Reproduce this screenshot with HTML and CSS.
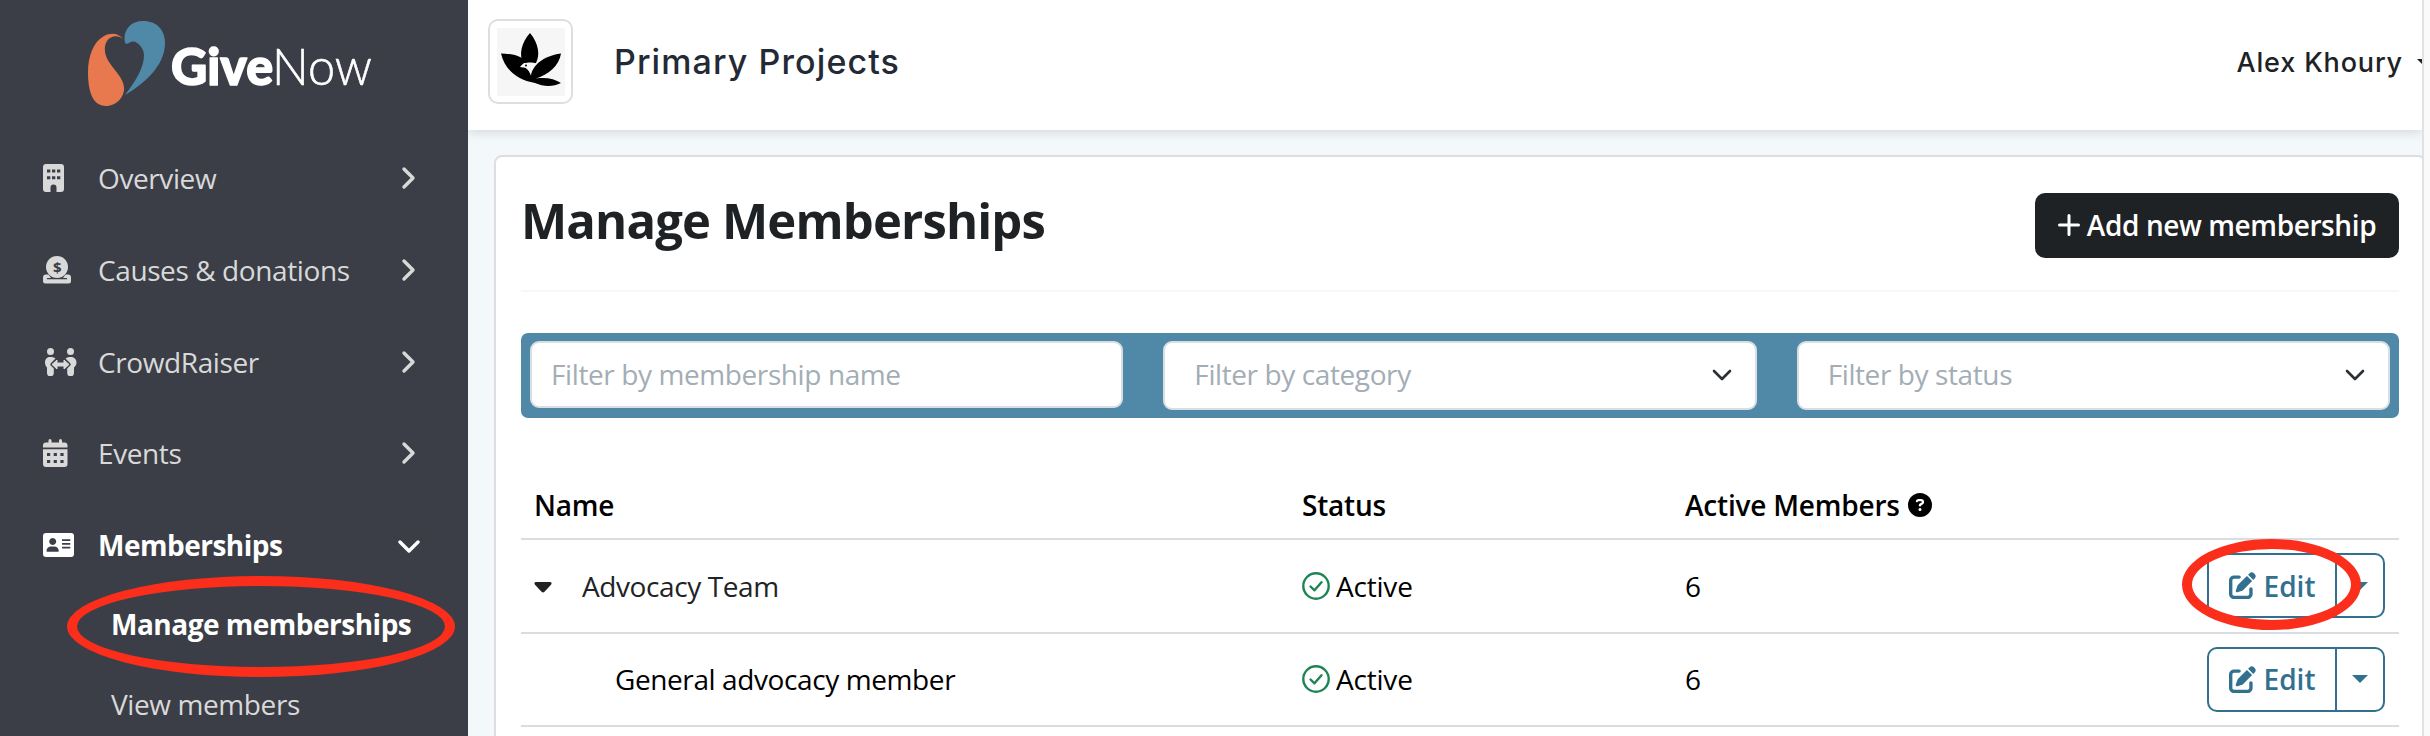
FILE: index.html
```html
<!DOCTYPE html>
<html lang="en">
<head>
    <meta charset="UTF-8">
    <meta name="viewport" content="width=device-width, initial-scale=1.0">
    <title>Manage Memberships - GiveNow</title>
    <link rel="stylesheet" href="styles.css">
</head>
<body>
    <aside class="sidebar">
        <svg class="brand" viewBox="0 0 290 90">
            <path fill="#e8784e" d="M35.500 19.500C31 13 23 12 16 16C5 22 0 37 0 52C0 72 5 86 18 86C29 86 37 76 36 67C35 58 27 51 21 42C17 36 15 27 19 21C23 15 31 15 35.500 19.500Z"/>
            <path fill="#5089a7" d="M36.500 20C36 9 43 1 55 1C69 1 77 10 77 23C77 47 54 65 37 75C47 62 56 48 56 35C56 28 49 21 45 21.500C42 21.500 39 25 37.500 23.500Z"/>
            <text class="brand-bold" x="83" y="65" textLength="102" lengthAdjust="spacingAndGlyphs">Give</text>
            <text class="brand-light" x="184" y="65" textLength="100" lengthAdjust="spacingAndGlyphs">Now</text>
        </svg>

        <nav class="nav">
            <a class="nav-item">
                <svg class="nav-icon" viewBox="0 0 32 28" fill="currentColor">
                    <path fill-rule="evenodd" d="M3 0H18a3 3 0 0 1 3 3V25a3 3 0 0 1-3 3H13.500V23.500a3 3 0 0 0-6 0V28H3a3 3 0 0 1-3-3V3a3 3 0 0 1 3-3ZM4 5.500v3h3.300v-3ZM9 5.500v3h3.300v-3ZM14 5.500v3h3.300v-3ZM4 12.300v3h3.300v-3ZM9 12.300v3h3.300v-3ZM14 12.300v3h3.300v-3Z"/>
                </svg>
                <span>Overview</span>
                <svg class="chevron" viewBox="0 0 22 24"><path d="M6 3L15 12L6 21"/></svg>
            </a>
            <a class="nav-item">
                <svg class="nav-icon" viewBox="0 0 32 28">
                    <circle cx="14" cy="11" r="11" fill="currentColor"/>
                    <path fill="currentColor" d="M3 18.500H5.500L8 22H4V23.300H24V22H20L22.500 18.500H25a3 3 0 0 1 3 3V25a2.500 2.500 0 0 1-2.500 2.500H2.500A2.500 2.500 0 0 1 0 25V21.500a3 3 0 0 1 3-3Z"/>
                    <text class="coin" x="14" y="16.500" text-anchor="middle">$</text>
                </svg>
                <span>Causes &amp; donations</span>
                <svg class="chevron" viewBox="0 0 22 24"><path d="M6 3L15 12L6 21"/></svg>
            </a>
            <a class="nav-item">
                <svg class="nav-icon nav-icon-wide" viewBox="0 0 34 28" fill="currentColor">
                    <circle cx="7.500" cy="3.500" r="3.500"/>
                    <circle cx="27.500" cy="3.500" r="3.500"/>
                    <path d="M7 9C3.500 9 2 11.500 2 14.500C2 17 3 18.500 4 19.500V25a3.300 3.300 0 0 0 6.800 0V20.500L8 17.800a2 2 0 0 1 0-2.800L12.500 10.500C11 9.300 9 9 7 9Z"/>
                    <path d="M28 9C31.500 9 33.500 11.500 33.500 14.500C33.500 17 32 18.500 31 19.500V25a3.300 3.300 0 0 1-6.800 0V20.500L27 17.800a2 2 0 0 0 0-2.800L22.500 10.500C24 9.300 26 9 28 9Z"/>
                    <path d="M9 16.500L14 12V15H21V12L26 16.500L21 21V18H14V21Z" stroke="currentColor" stroke-linejoin="round"/>
                </svg>
                <span>CrowdRaiser</span>
                <svg class="chevron" viewBox="0 0 22 24"><path d="M6 3L15 12L6 21"/></svg>
            </a>
            <a class="nav-item">
                <svg class="nav-icon" viewBox="0 0 32 28" fill="currentColor">
                    <path d="M5.500 1.500a1.500 1.500 0 0 1 3 0V3.500H16V1.500a1.500 1.500 0 0 1 3 0V3.500H21.500a3 3 0 0 1 3 3V8.500H0V6.500a3 3 0 0 1 3-3H5.500Z"/>
                    <path fill-rule="evenodd" d="M0 10.300H24.500V25a3 3 0 0 1-3 3H3a3 3 0 0 1-3-3ZM4 14v3h3.200v-3ZM10.700 14v3h3.200v-3ZM17.400 14v3h3.200v-3ZM4 21v3h3.200v-3ZM10.700 21v3h3.200v-3ZM17.400 21v3h3.200v-3Z"/>
                </svg>
                <span>Events</span>
                <svg class="chevron" viewBox="0 0 22 24"><path d="M6 3L15 12L6 21"/></svg>
            </a>
            <a class="nav-item active">
                <svg class="nav-icon" viewBox="0 0 32 28" fill="currentColor">
                    <path fill-rule="evenodd" d="M3 2H28a3 3 0 0 1 3 3V23a3 3 0 0 1-3 3H3a3 3 0 0 1-3-3V5a3 3 0 0 1 3-3ZM9.700 7a3.500 3.500 0 1 0 .01 0ZM8 15.500c-2.500 0-4.500 2-4.500 4.500a.8.800 0 0 0 .8.800H15a.8.800 0 0 0 .8-.8c0-2.500-2-4.500-4.500-4.500ZM19 8.300v1.700h8.300V8.300ZM19 12v1.700h8.300V12ZM19 15.700v1.700h8.300v-1.700Z"/>
                </svg>
                <span>Memberships</span>
                <svg class="chevron" viewBox="0 0 22 24"><path d="M2 9L11 18L20 9"/></svg>
            </a>
        </nav>

        <div class="subnav">
            <a class="subnav-item active">
                Manage memberships
                <span class="ring ring-menu"></span>
            </a>
            <a class="subnav-item">View members</a>
        </div>
    </aside>

    <div class="page">
        <header class="header">
            <div class="org-logo">
                <svg viewBox="0 0 68 68">
                    <path d="M33 5C24 15 22 27 26 34.500L30 36L39 35C43 27 42 16 33 5Z"/>
                    <path d="M4 25.500C15 25.500 25 28 29 34C26 35 25 37 23 39C27 38 31 40 34 47C36 38 45 28 64 25.500C62 38 52 46 39 50.500C49 49 58 51 64 55C56 59 47 59 38 55C20 52 8 42 4 25.500Z"/>
                    <path class="beak" d="M23 39L27 35.500C31 34 36 34.500 38 35C35 38 34 42 34 47.500C32 42 30 39.500 26 39.500Z"/>
                    <circle cx="29" cy="37.500" r="1"/>
                </svg>
            </div>
            <div class="org-name">Primary Projects</div>
            <div class="user">
                <span>Alex Khoury</span>
                <i class="user-caret"></i>
            </div>
        </header>

        <main class="card">
            <div class="title-row">
                <h1>Manage Memberships</h1>
                <button class="btn-add">
                    <svg viewBox="0 0 22 22"><path d="M11 1.500V20.500M1.500 11H20.500"/></svg>
                    <span>Add new membership</span>
                </button>
            </div>

            <div class="filters">
                <div class="field field-text">Filter by membership name</div>
                <div class="field">
                    <span>Filter by category</span>
                    <svg viewBox="0 0 22 14"><path d="M3 3L11 11L19 3"/></svg>
                </div>
                <div class="field">
                    <span>Filter by status</span>
                    <svg viewBox="0 0 22 14"><path d="M3 3L11 11L19 3"/></svg>
                </div>
            </div>

            <div class="table">
                <div class="row head">
                    <div>Name</div>
                    <div>Status</div>
                    <div class="with-icon">
                        Active Members
                        <svg class="help" viewBox="0 0 512 512"><path d="M256 512A256 256 0 1 0 256 0a256 256 0 1 0 0 512zM169.800 165.300c7.900-22.300 29.100-37.300 52.800-37.300h58.300c34.900 0 63.100 28.300 63.100 63.100c0 22.600-12.100 43.500-31.700 54.800L280 264.400c-.2 13-10.900 23.600-24 23.600c-13.300 0-24-10.700-24-24V250.500c0-8.600 4.600-16.500 12.100-20.800l44.300-25.400c4.700-2.700 7.600-7.700 7.600-13.100c0-8.400-6.800-15.100-15.100-15.100H222.600c-3.400 0-6.400 2.100-7.500 5.300l-.4 1.200c-4.400 12.500-18.200 19-30.600 14.600s-19-18.200-14.600-30.600l.4-1.200zM224 352a32 32 0 1 1 64 0 32 32 0 1 1 -64 0z"/></svg>
                    </div>
                    <div></div>
                </div>
                <div class="row">
                    <div class="name-parent">
                        <svg class="toggle" viewBox="0 0 18 11"><path d="M2 0H16C17.800 0 18 1.500 17 2.700L10.500 9.700C9.600 10.600 8.400 10.600 7.500 9.700L1 2.700C0 1.500 .2 0 2 0Z"/></svg>
                        <span>Advocacy Team</span>
                    </div>
                    <div class="status">
                        <svg viewBox="0 0 28 28"><circle cx="14" cy="14" r="12.700"/><path d="M8.500 14.500L12.500 18.300L19.500 10.200"/></svg>
                        <span>Active</span>
                    </div>
                    <div>6</div>
                    <div class="actions">
                        <div class="btn-group">
                            <button class="btn-edit">
                                <svg viewBox="0 0 512 512"><path d="M471.600 21.700c-21.900-21.900-57.300-21.900-79.200 0L362.300 51.700l97.900 97.900 30.100-30.100c21.900-21.900 21.900-57.300 0-79.200L471.600 21.700zm-299.200 220c-6.100 6.100-10.800 13.600-13.500 21.900l-29.600 88.800c-2.900 8.600-.6 18.100 5.800 24.600s15.900 8.700 24.600 5.800l88.800-29.600c8.200-2.700 15.700-7.400 21.900-13.500L437.700 172.300 339.700 74.300 172.400 241.700zM96 64C43 64 0 107 0 160V416c0 53 43 96 96 96H352c53 0 96-43 96-96V320c0-17.700-14.300-32-32-32s-32 14.300-32 32v96c0 17.700-14.300 32-32 32H96c-17.700 0-32-14.300-32-32V160c0-17.700 14.300-32 32-32h96c17.700 0 32-14.300 32-32s-14.300-32-32-32H96z"/></svg>
                                <span>Edit</span>
                            </button>
                            <button class="btn-more"><i></i></button>
                            <span class="ring ring-edit"></span>
                        </div>
                    </div>
                </div>
                <div class="row">
                    <div class="name-child">General advocacy member</div>
                    <div class="status">
                        <svg viewBox="0 0 28 28"><circle cx="14" cy="14" r="12.700"/><path d="M8.500 14.500L12.500 18.300L19.500 10.200"/></svg>
                        <span>Active</span>
                    </div>
                    <div>6</div>
                    <div class="actions">
                        <div class="btn-group">
                            <button class="btn-edit">
                                <svg viewBox="0 0 512 512"><path d="M471.600 21.700c-21.900-21.900-57.300-21.900-79.200 0L362.300 51.700l97.900 97.900 30.100-30.100c21.900-21.900 21.900-57.300 0-79.200L471.600 21.700zm-299.200 220c-6.100 6.100-10.800 13.600-13.500 21.900l-29.600 88.800c-2.900 8.600-.6 18.100 5.800 24.600s15.900 8.700 24.600 5.800l88.800-29.600c8.200-2.700 15.700-7.400 21.900-13.500L437.700 172.300 339.700 74.300 172.400 241.700zM96 64C43 64 0 107 0 160V416c0 53 43 96 96 96H352c53 0 96-43 96-96V320c0-17.700-14.300-32-32-32s-32 14.300-32 32v96c0 17.700-14.300 32-32 32H96c-17.700 0-32-14.300-32-32V160c0-17.700 14.300-32 32-32h96c17.700 0 32-14.300 32-32s-14.300-32-32-32H96z"/></svg>
                                <span>Edit</span>
                            </button>
                            <button class="btn-more"><i></i></button>
                        </div>
                    </div>
                </div>
            </div>
        </main>
    </div>
</body>
</html>
```
FILE: styles.css
```css
:root {
    --sidebar: #3c3e47;
    --sidebar-text: #d9d9d9;
    --dark: #1e2225;
    --blue: #5089a7;
    --link: #32708f;
    --line: #d9dde1;
    --red: #fb2d1b;
}

* {
    margin: 0;
    padding: 0;
    box-sizing: border-box;
}

body {
    display: flex;
    width: 2430px;
    height: 736px;
    overflow: hidden;
    background: #fafafa;
    color: #000;
    font-family: "Open Sans", "Noto Sans", sans-serif;
    font-size: 28px;
    line-height: 38px;
    letter-spacing: -0.4px;
}

button {
    font: inherit;
    letter-spacing: inherit;
    background: none;
    border: none;
}

svg {
    display: block;
    flex: none;
}

/* Sidebar */
.sidebar {
    width: 468px;
    height: 736px;
    flex: none;
    background: var(--sidebar);
    color: var(--sidebar-text);
    padding-top: 20px;
}

.brand {
    width: 290px;
    height: 90px;
    margin-left: 88px;
    fill: #fff;
    font-family: Lato, sans-serif;
    font-size: 52px;
    letter-spacing: 0;
}

.brand-bold {
    font-weight: 900;
    stroke: #fff;
    stroke-width: 1.6;
    stroke-linejoin: round;
}

.brand-light {
    font-weight: 300;
    stroke: #fff;
    stroke-width: 0.6;
}

.nav {
    display: flex;
    flex-direction: column;
    gap: 33.75px;
    padding: 39px 48px 0 43px;
}

.nav-item {
    display: flex;
    align-items: center;
    height: 58px;
}

.nav-item span {
    flex: 1;
}

.nav-icon {
    width: 32px;
    height: 28px;
    margin-right: 23px;
}

.nav-icon-wide {
    width: 34px;
    margin-right: 21px;
}

.coin {
    font-size: 15px;
    font-weight: 700;
    fill: var(--sidebar);
}

.chevron {
    width: 22px;
    height: 24px;
    fill: none;
    stroke: currentColor;
    stroke-width: 3.4;
    stroke-linecap: round;
    stroke-linejoin: round;
}

.active {
    color: #fff;
    font-weight: 700;
    letter-spacing: -0.5px;
}

.subnav {
    padding: 10px 0 0 111px;
}

.subnav-item {
    display: flex;
    align-items: center;
    position: relative;
    height: 80px;
}

/* Highlight rings drawn over the controls */
.ring {
    position: absolute;
    border: 10px solid var(--red);
    border-radius: 50%;
}

.ring-menu {
    left: -44px;
    top: -8px;
    width: 388px;
    height: 101px;
}

.ring-edit {
    left: -27px;
    top: -16px;
    width: 179px;
    height: 91px;
}

/* Page */
.page {
    width: 1956px;
    flex: none;
    overflow: hidden;
    background: #f3f8fb;
    border-right: 2px solid #e2e2e2;
}

.header {
    display: flex;
    align-items: center;
    height: 130px;
    padding: 0 0 7px 20px;
    background: #fff;
    box-shadow: 0 3px 10px rgba(0, 0, 0, 0.12);
    font-family: Inter, sans-serif;
    font-weight: 500;
}

.org-logo {
    width: 85px;
    height: 85px;
    padding: 7px;
    border: 2px solid #dedede;
    border-radius: 10px;
}

.org-logo svg {
    width: 68px;
    height: 68px;
    background: #f6f6f6;
}

.org-logo .beak {
    fill: #f6f6f6;
}

.org-name {
    margin-left: 41px;
    color: #242936;
    font-size: 34px;
    letter-spacing: 1.1px;
}

.user {
    display: flex;
    align-items: center;
    gap: 14px;
    margin-left: auto;
    margin-right: -11px;
    padding-top: 2px;
    color: var(--dark);
    font-size: 27px;
    letter-spacing: 0.85px;
}

.user-caret {
    border: 8px solid transparent;
    border-top-color: var(--dark);
    border-bottom: 0;
}

/* Card */
.card {
    height: 620px;
    margin: 25px -4px 0 26px;
    padding: 36px 25px 0 25px;
    background: #fff;
    border: 2px solid #dedede;
    border-radius: 8px;
}

.title-row {
    display: flex;
    justify-content: space-between;
    align-items: flex-start;
    height: 99px;
    border-bottom: 2px solid #f6f7f7;
}

h1 {
    color: var(--dark);
    font-size: 49px;
    font-weight: 700;
    line-height: 54px;
    letter-spacing: -0.85px;
}

.btn-add {
    display: flex;
    align-items: center;
    justify-content: center;
    gap: 7px;
    width: 364px;
    height: 65px;
    padding-bottom: 1px;
    border-radius: 10px;
    background: var(--dark);
    color: #fff;
    font-weight: 600;
}

.btn-add svg {
    width: 22px;
    height: 22px;
    fill: none;
    stroke: #fff;
    stroke-width: 3;
    stroke-linecap: round;
}

.filters {
    display: grid;
    grid-template-columns: repeat(3, 1fr);
    gap: 40px;
    align-items: start;
    height: 85px;
    margin-top: 41px;
    padding: 8px 9px;
    border-radius: 7px;
    background: var(--blue);
    color: #a3adb6;
}

.field {
    display: flex;
    align-items: center;
    justify-content: space-between;
    height: 69px;
    padding: 0 22px 3px 29px;
    border: 2px solid #d9dee2;
    border-radius: 9px;
    background: #fff;
}

.field-text {
    height: 67px;
    padding: 0 20px 1px 19px;
}

.field svg {
    width: 22px;
    height: 14px;
    margin-top: 2px;
    fill: none;
    stroke: #2b3035;
    stroke-width: 2.6;
    stroke-linecap: round;
    stroke-linejoin: round;
}

/* Table */
.table {
    padding-top: 52px;
}

.row {
    display: grid;
    grid-template-columns: 768px 383px 1fr 192px;
    align-items: center;
    height: 93.5px;
    padding: 0 14px 0 13px;
    border-bottom: 2px solid var(--line);
}

.head {
    height: 70px;
    padding-top: 1px;
    font-weight: 600;
    letter-spacing: -0.2px;
}

.with-icon {
    display: flex;
    align-items: center;
    gap: 8px;
}

.help {
    width: 24px;
    height: 24px;
    margin-top: 1px;
}

.name-parent {
    display: flex;
    align-items: center;
    gap: 30px;
    color: #212325;
}

.toggle {
    width: 18px;
    height: 11px;
    margin-top: 3px;
    fill: #212325;
}

.name-child {
    padding-left: 81px;
}

.status {
    display: flex;
    align-items: center;
    gap: 6px;
    letter-spacing: -0.2px;
}

.status svg {
    width: 28px;
    height: 28px;
    fill: none;
    stroke: #1f8455;
    stroke-width: 2.4;
    stroke-linecap: round;
    stroke-linejoin: round;
}

.actions {
    display: flex;
    justify-content: flex-end;
}

.btn-group {
    display: flex;
    position: relative;
    width: 178px;
    height: 65px;
    border: 2px solid var(--link);
    border-radius: 10px;
    color: var(--link);
}

.btn-edit {
    display: flex;
    align-items: center;
    justify-content: center;
    gap: 8px;
    width: 126px;
    color: var(--link);
    font-weight: 600;
    letter-spacing: 0;
}

.btn-edit svg {
    width: 27px;
    height: 27px;
    fill: currentColor;
}

.btn-more {
    flex: 1;
    display: flex;
    align-items: center;
    justify-content: center;
    border-left: 2px solid var(--link);
}

.btn-more i {
    border: 8px solid transparent;
    border-top-color: var(--link);
    border-bottom: 0;
}
```
